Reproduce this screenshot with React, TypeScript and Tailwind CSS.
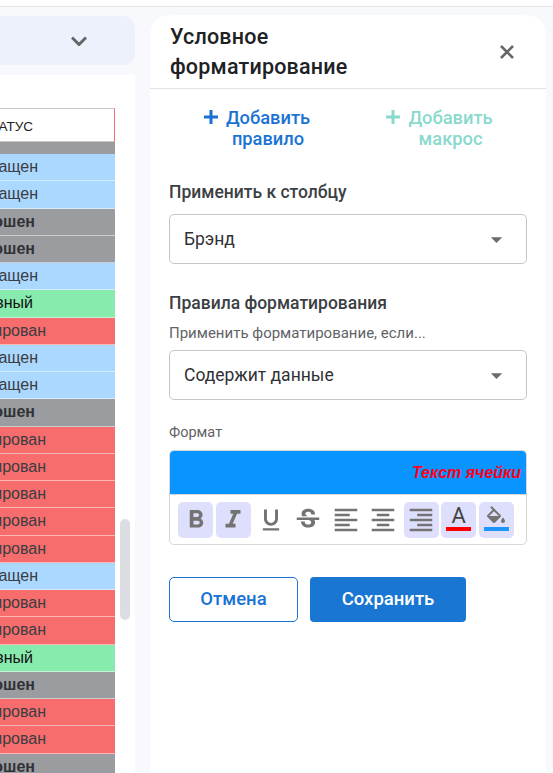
import {
  MdArrowDropDown,
  MdFormatBold,
  MdFormatItalic,
  MdFormatUnderlined,
  MdStrikethroughS,
  MdFormatAlignLeft,
  MdFormatAlignCenter,
  MdFormatAlignRight,
} from "react-icons/md";
import type { ReactNode } from "react";

type Status = "blue" | "gray" | "green" | "red";

const kinds: Record<Status, { text: string; cls: string }> = {
  blue: { text: "Возвращен", cls: "bg-[#abd8fe] text-[#3a3d42] pr-[77px]" },
  gray: { text: "Брошен", cls: "bg-[#9a9c9f] text-[#303236] font-bold pr-[80px]" },
  green: { text: "Главный", cls: "bg-[#88ebae] text-[#111111] pr-[82px]" },
  red: { text: "Заблокирован", cls: "bg-[#f76d6d] text-[#3a3d42] pr-[69px]" },
};

const rows: Status[] = [
  "blue", "blue", "gray", "gray", "blue", "green", "red", "blue", "blue", "gray",
  "red", "red", "red", "red", "red", "blue", "red", "red", "green", "gray", "red", "red", "gray",
];

function Row({ status }: { status: Status }) {
  const k = kinds[status];
  return (
    <div className={`flex h-[27.25px] shrink-0 items-center justify-end whitespace-nowrap border-b border-white/50 text-[16px] ${k.cls}`}>
      {k.text}
    </div>
  );
}

function Select({ value }: { value: string }) {
  return (
    <div className="flex h-[50px] items-center justify-between rounded-[5px] border border-[#c4c6ca] pl-[14px] pr-[16px] text-[17.5px] text-[#2f3134]">
      <span>{value}</span>
      <MdArrowDropDown size={27} className="text-[#6b6b6b]" />
    </div>
  );
}

function Tool({ on, children }: { on?: boolean; children: ReactNode }) {
  return (
    <div className={`relative flex h-[36px] w-[35px] items-center justify-center rounded-[5px] text-[#737373] ${on ? "bg-[#dedffc]" : ""}`}>
      {children}
    </div>
  );
}

function Plus() {
  return (
    <svg viewBox="0 0 14 14" className="mt-[3px] mr-[8px] h-[14px] w-[14px] shrink-0" stroke="currentColor" strokeWidth={3}>
      <path d="M7 0v14M0 7h14" />
    </svg>
  );
}

export default function App() {
  return (
    <div className="flex h-[773px] w-[553px] flex-col overflow-hidden bg-white font-['Roboto',sans-serif]">
      <div className="h-[7px] shrink-0 border-b border-[#e4e5e8] bg-white" />
      <div className="flex flex-1 bg-[#f8f9fd]">
        {/* left: table behind the panel */}
        <div className="flex w-[135px] shrink-0 flex-col pt-[9px]">
          <div className="flex h-[49px] items-center justify-end rounded-r-[12px] bg-[#edf1fb] pr-[48px]">
            <svg viewBox="0 0 16 10" className="h-[10px] w-[16px] text-[#666666]" fill="none" stroke="currentColor" strokeWidth={3}>
              <path d="M1 1.5l7 7 7-7" />
            </svg>
          </div>
          <div className="mt-[10px] flex flex-1 overflow-hidden bg-white pt-[33px] font-['Liberation_Sans',sans-serif]">
            <div className="flex w-[115px] shrink-0 flex-col">
              <div className="flex h-[34px] shrink-0 items-center justify-end border-y border-r border-[#c9c9c9] border-r-[#f76d6d] bg-white pr-[81px] pt-[4px] text-[13.5px] whitespace-nowrap text-[#222222]">
                СТАТУС
              </div>
              <div className="h-[12px] shrink-0 bg-[#9a9c9f]" />
              {rows.map((s, i) => (
                <Row key={i} status={s} />
              ))}
            </div>
            <div className="ml-[5px] mt-[411px] h-[101px] w-[10px] rounded-[5px] bg-[#dcdde2]" />
          </div>
        </div>

        {/* conditional formatting panel */}
        <div className="ml-[15px] mt-[8px] w-[396px] rounded-t-[20px] bg-white">
          <div className="flex h-[74px] items-center justify-between border-b border-[#e2e3e6] pl-[20px] pr-[32px]">
            <h1 className="text-[21.5px] leading-[30px] font-medium tracking-[0.2px] text-[#202124]">
              Условное
              <br />
              форматирование
            </h1>
            <svg viewBox="0 0 14 14" className="h-[14px] w-[14px] text-[#666666]" stroke="currentColor" strokeWidth={2.6}>
              <path d="M1 1l12 12M13 1L1 13" />
            </svg>
          </div>

          <div className="px-[19px]">
            <div className="grid grid-cols-2 pt-[18px] text-[18.3px] leading-[21px] font-medium">
              <div className="flex items-start justify-center pr-[3px] text-[#1a73d4]">
                <Plus />
                <span className="text-center">
                  Добавить
                  <br />
                  правило
                </span>
              </div>
              <div className="flex items-start justify-center pl-[4px] text-[#8ad9cd]">
                <Plus />
                <span className="text-center">
                  Добавить
                  <br />
                  макрос
                </span>
              </div>
            </div>

            <div className="mt-[33px] text-[17.5px] leading-[20px] font-medium text-[#3c4043]">Применить к столбцу</div>
            <div className="mt-[12px]">
              <Select value="Брэнд" />
            </div>

            <div className="mt-[29px] text-[17.5px] leading-[20px] font-medium text-[#3c4043]">Правила форматирования</div>
            <div className="mt-[11px] text-[15px] leading-[18px] text-[#5f6368]">Применить форматирование, если...</div>
            <div className="mt-[8px]">
              <Select value="Содержит данные" />
            </div>

            <div className="mt-[24px] text-[14.5px] leading-[18px] text-[#5f6368]">Формат</div>
            <div className="mt-[8px] overflow-hidden rounded-[5px] border border-[#d6d7da]">
              <div className="flex h-[44px] items-center justify-end border-b border-[#d6d7da] bg-[#0a94ff] pr-[5px] font-['Liberation_Sans',sans-serif] text-[16px] font-bold text-[#ff0018] italic">
                Текст ячейки
              </div>
              <div className="flex h-[49px] items-start gap-[2.6px] pl-[8px] pt-[7px]">
                <Tool on><MdFormatBold size={30} /></Tool>
                <Tool on><MdFormatItalic size={30} /></Tool>
                <Tool><MdFormatUnderlined size={28} /></Tool>
                <Tool><MdStrikethroughS size={30} /></Tool>
                <Tool><MdFormatAlignLeft size={30} /></Tool>
                <Tool><MdFormatAlignCenter size={30} /></Tool>
                <Tool on><MdFormatAlignRight size={30} /></Tool>
                <Tool on>
                  <div className="-mt-[3px] flex w-[25px] flex-col items-center">
                    <span className="text-[22px] leading-[20px] text-[#444444]">A</span>
                    <span className="mt-[1px] h-[4px] w-[25px] bg-[#ff0000]" />
                  </div>
                </Tool>
                <Tool on>
                  <div className="-mt-[3px] flex w-[25px] flex-col items-center">
                    <svg viewBox="0 0 24 20" className="h-[20px] w-[24px]" fill="currentColor">
                      <path d="M16.56 8.94 7.62 0 6.21 1.41l2.38 2.38-5.15 5.15c-.59.59-.59 1.54 0 2.12l5.5 5.5c.29.29.68.44 1.06.44s.77-.15 1.06-.44l5.5-5.5c.59-.58.59-1.53 0-2.12zM5.21 10 10 5.21 14.79 10H5.21zM19 11.5s-2 2.17-2 3.5c0 1.1.9 2 2 2s2-.9 2-2c0-1.33-2-3.5-2-3.5z" />
                    </svg>
                    <span className="mt-[1px] h-[4px] w-[25px] bg-[#1e96fc]" />
                  </div>
                </Tool>
              </div>
            </div>

            <div className="mt-[32px] flex gap-[12px] text-[18.5px] font-medium">
              <button className="h-[45px] w-[129px] rounded-[5px] border border-[#1a73d4] bg-white text-[#1a73d4]">Отмена</button>
              <button className="h-[45px] w-[156px] rounded-[4px] bg-[#1976d2] text-white">Сохранить</button>
            </div>
          </div>
        </div>
      </div>
    </div>
  );
}
